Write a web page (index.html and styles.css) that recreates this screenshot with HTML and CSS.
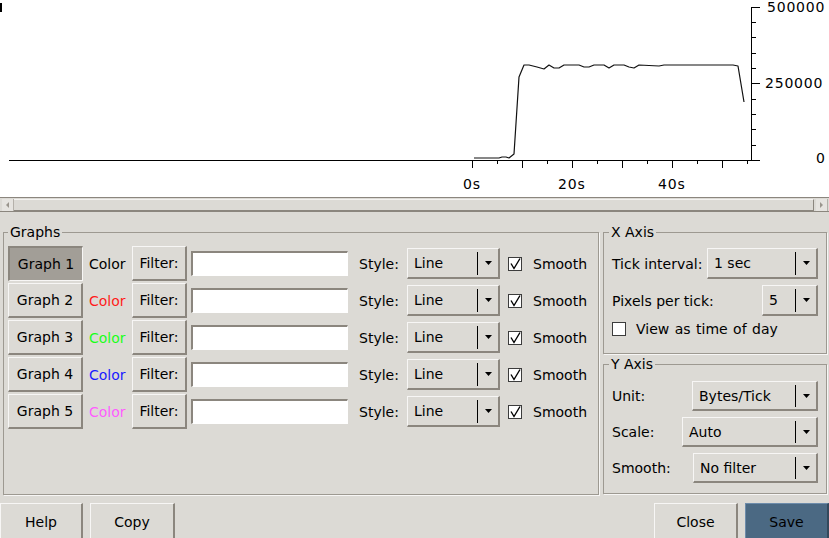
FILE: index.html
```html
<!DOCTYPE html>
<html>
<head>
<meta charset="utf-8">
<title>IO Graphs</title>
<link rel="stylesheet" href="styles.css">
</head>
<body>
<div class="plot">
  <svg class="plot-svg" width="829" height="197" viewBox="0 0 829 197">
    <rect x="0" y="3" width="2" height="9" fill="#000"/>
    <g class="axis" stroke="#000" stroke-width="1" fill="none">
      <line x1="9" y1="160.5" x2="752" y2="160.5"/>
      <line x1="751.5" y1="7" x2="751.5" y2="161"/>
      <line x1="751" y1="7.5" x2="760" y2="7.5"/>
      <line x1="751" y1="22.5" x2="756" y2="22.5"/>
      <line x1="751" y1="37.5" x2="756" y2="37.5"/>
      <line x1="751" y1="53.5" x2="756" y2="53.5"/>
      <line x1="751" y1="68.5" x2="756" y2="68.5"/>
      <line x1="751" y1="83.5" x2="760" y2="83.5"/>
      <line x1="751" y1="99.5" x2="756" y2="99.5"/>
      <line x1="751" y1="114.5" x2="756" y2="114.5"/>
      <line x1="751" y1="129.5" x2="756" y2="129.5"/>
      <line x1="751" y1="145.5" x2="756" y2="145.5"/>
      <line x1="751" y1="160.5" x2="760" y2="160.5"/>
      <line x1="472.5" y1="160" x2="472.5" y2="168"/>
      <line x1="497.5" y1="160" x2="497.5" y2="164"/>
      <line x1="522.5" y1="160" x2="522.5" y2="168"/>
      <line x1="547.5" y1="160" x2="547.5" y2="164"/>
      <line x1="572.5" y1="160" x2="572.5" y2="168"/>
      <line x1="597.5" y1="160" x2="597.5" y2="164"/>
      <line x1="622.5" y1="160" x2="622.5" y2="168"/>
      <line x1="647.5" y1="160" x2="647.5" y2="164"/>
      <line x1="672.5" y1="160" x2="672.5" y2="168"/>
      <line x1="697.5" y1="160" x2="697.5" y2="164"/>
      <line x1="722.5" y1="160" x2="722.5" y2="168"/>
      <line x1="747.5" y1="160" x2="747.5" y2="164"/>
    </g>
    <polyline class="series" fill="none" stroke="#111" stroke-width="1.2" stroke-linejoin="round"
      points="474,158 499,158 502,157 506,157 509,158 514,154 519,77 524,65 529,65 537,67 544,69 549,65 554,68 559,68 564,65 579,65 584,67 589,67 594,65 604,65 609,68 614,65 624,65 629,67 634,68 639,65 659,66 664,65 733,65 738,66 744,102"/>
    <g class="axis-labels">
      <text x="463" y="189">0s</text>
      <text x="558" y="189">20s</text>
      <text x="658" y="189">40s</text>
      <text x="767" y="12">500000</text>
      <text x="765" y="88">250000</text>
      <text x="816" y="163">0</text>
    </g>
  </svg>
</div>

<div class="hscroll">
  <div class="sb-btn"><span class="tri tri-left"></span></div>
  <div class="sb-thumb"></div>
  <div class="sb-btn"><span class="tri tri-right"></span></div>
</div>

<div class="panels">
  <fieldset class="group graphs">
    <legend>Graphs</legend>
    <div class="graph-rows">
      <div class="graph-row">
        <button class="btn gbtn pressed">Graph 1</button>
        <span class="color c-black">Color</span>
        <button class="btn filter">Filter:</button>
        <span class="entry"></span>
        <span class="style-label">Style:</span>
        <div class="combo style-combo"><span class="combo-text">Line</span><span class="combo-sep"></span><span class="combo-arrow"><svg width="7" height="4" viewBox="0 0 7 4"><polygon points="0,0 7,0 3.5,4" fill="#000"/></svg></span></div>
        <span class="check checked"><svg width="12" height="12" viewBox="0 0 12 12"><polyline points="2,5.5 5,10.5 11,0.5" fill="none" stroke="#000" stroke-width="1.4"/></svg></span>
        <span class="smooth-label">Smooth</span>
      </div>
      <div class="graph-row">
        <button class="btn gbtn">Graph 2</button>
        <span class="color c-red">Color</span>
        <button class="btn filter">Filter:</button>
        <span class="entry"></span>
        <span class="style-label">Style:</span>
        <div class="combo style-combo"><span class="combo-text">Line</span><span class="combo-sep"></span><span class="combo-arrow"><svg width="7" height="4" viewBox="0 0 7 4"><polygon points="0,0 7,0 3.5,4" fill="#000"/></svg></span></div>
        <span class="check checked"><svg width="12" height="12" viewBox="0 0 12 12"><polyline points="2,5.5 5,10.5 11,0.5" fill="none" stroke="#000" stroke-width="1.4"/></svg></span>
        <span class="smooth-label">Smooth</span>
      </div>
      <div class="graph-row">
        <button class="btn gbtn">Graph 3</button>
        <span class="color c-green">Color</span>
        <button class="btn filter">Filter:</button>
        <span class="entry"></span>
        <span class="style-label">Style:</span>
        <div class="combo style-combo"><span class="combo-text">Line</span><span class="combo-sep"></span><span class="combo-arrow"><svg width="7" height="4" viewBox="0 0 7 4"><polygon points="0,0 7,0 3.5,4" fill="#000"/></svg></span></div>
        <span class="check checked"><svg width="12" height="12" viewBox="0 0 12 12"><polyline points="2,5.5 5,10.5 11,0.5" fill="none" stroke="#000" stroke-width="1.4"/></svg></span>
        <span class="smooth-label">Smooth</span>
      </div>
      <div class="graph-row">
        <button class="btn gbtn">Graph 4</button>
        <span class="color c-blue">Color</span>
        <button class="btn filter">Filter:</button>
        <span class="entry"></span>
        <span class="style-label">Style:</span>
        <div class="combo style-combo"><span class="combo-text">Line</span><span class="combo-sep"></span><span class="combo-arrow"><svg width="7" height="4" viewBox="0 0 7 4"><polygon points="0,0 7,0 3.5,4" fill="#000"/></svg></span></div>
        <span class="check checked"><svg width="12" height="12" viewBox="0 0 12 12"><polyline points="2,5.5 5,10.5 11,0.5" fill="none" stroke="#000" stroke-width="1.4"/></svg></span>
        <span class="smooth-label">Smooth</span>
      </div>
      <div class="graph-row">
        <button class="btn gbtn">Graph 5</button>
        <span class="color c-pink">Color</span>
        <button class="btn filter">Filter:</button>
        <span class="entry"></span>
        <span class="style-label">Style:</span>
        <div class="combo style-combo"><span class="combo-text">Line</span><span class="combo-sep"></span><span class="combo-arrow"><svg width="7" height="4" viewBox="0 0 7 4"><polygon points="0,0 7,0 3.5,4" fill="#000"/></svg></span></div>
        <span class="check checked"><svg width="12" height="12" viewBox="0 0 12 12"><polyline points="2,5.5 5,10.5 11,0.5" fill="none" stroke="#000" stroke-width="1.4"/></svg></span>
        <span class="smooth-label">Smooth</span>
      </div>
    </div>
  </fieldset>

  <div class="axes">
    <fieldset class="group xaxis">
      <legend>X Axis</legend>
      <div class="axis-row">
        <span>Tick interval:</span>
        <div class="combo w-tick"><span class="combo-text">1 sec</span><span class="combo-sep"></span><span class="combo-arrow"><svg width="7" height="4" viewBox="0 0 7 4"><polygon points="0,0 7,0 3.5,4" fill="#000"/></svg></span></div>
      </div>
      <div class="axis-row">
        <span>Pixels per tick:</span>
        <div class="combo w-ppt"><span class="combo-text">5</span><span class="combo-sep"></span><span class="combo-arrow"><svg width="7" height="4" viewBox="0 0 7 4"><polygon points="0,0 7,0 3.5,4" fill="#000"/></svg></span></div>
      </div>
      <div class="check-row">
        <span class="check"></span>
        <span class="check-text">View as time of day</span>
      </div>
    </fieldset>
    <fieldset class="group yaxis">
      <legend>Y Axis</legend>
      <div class="axis-row">
        <span>Unit:</span>
        <div class="combo w-unit"><span class="combo-text">Bytes/Tick</span><span class="combo-sep"></span><span class="combo-arrow"><svg width="7" height="4" viewBox="0 0 7 4"><polygon points="0,0 7,0 3.5,4" fill="#000"/></svg></span></div>
      </div>
      <div class="axis-row">
        <span>Scale:</span>
        <div class="combo w-scale"><span class="combo-text">Auto</span><span class="combo-sep"></span><span class="combo-arrow"><svg width="7" height="4" viewBox="0 0 7 4"><polygon points="0,0 7,0 3.5,4" fill="#000"/></svg></span></div>
      </div>
      <div class="axis-row">
        <span>Smooth:</span>
        <div class="combo w-smooth"><span class="combo-text">No filter</span><span class="combo-sep"></span><span class="combo-arrow"><svg width="7" height="4" viewBox="0 0 7 4"><polygon points="0,0 7,0 3.5,4" fill="#000"/></svg></span></div>
      </div>
    </fieldset>
  </div>
</div>

<div class="actions">
  <button class="btn action w-help">Help</button>
  <button class="btn action w-copy">Copy</button>
  <span class="spacer"></span>
  <button class="btn action w-close">Close</button>
  <button class="btn action primary w-save">Save</button>
</div>
</body>
</html>
```
FILE: styles.css
```css
* { box-sizing: border-box; }
html, body { margin: 0; padding: 0; }
body {
  width: 829px;
  height: 538px;
  overflow: hidden;
  background: #dcdad5;
  font-family: "DejaVu Sans", sans-serif;
  font-size: 14px;
  color: #000;
}

/* plot */
.plot { height: 197px; background: #fff; }
.plot-svg { display: block; }
.axis-labels text {
  font-family: "DejaVu Sans", sans-serif;
  font-size: 14px;
  letter-spacing: 0.8px;
  fill: #000;
}

/* scrollbar */
.hscroll {
  height: 15px;
  border-top: 1px solid #8b867e;
  border-bottom: 1px solid #8b867e;
  display: flex;
  padding: 1px 1px 0 2px;
}
.sb-btn {
  width: 12px;
  background: #e6e4e0;
  border-right: 1px solid #b5b1aa;
  display: flex;
  align-items: center;
  justify-content: center;
}
.sb-thumb {
  flex: 1;
  border-top: 1px solid #f4f3f1;
  border-right: 1px solid #8b867e;
  border-bottom: 1px solid #8b867e;
  margin-right: 2px;
}
.tri { width: 0; height: 0; border-top: 3px solid transparent; border-bottom: 3px solid transparent; }
.tri-left { border-right: 3px solid #9a958d; }
.tri-right { border-left: 3px solid #9a958d; }

/* panels */
.panels {
  display: flex;
  gap: 4px;
  padding: 12px 2px 0 3px;
}
.group {
  margin: 0;
  min-width: 0;
  border: 1px solid #9d9991;
  box-shadow: 1px 1px 0 #f7f6f5;
}
.group legend {
  padding: 0 2px;
  line-height: 17px;
  font-size: 14px;
}
.graphs {
  width: 596px;
  height: 271px;
  padding: 5px 4px 0 4px;
}
.axes {
  width: 224px;
  display: flex;
  flex-direction: column;
  gap: 2px;
}
.xaxis {
  height: 130px;
  padding: 7px 8px 0 8px;
}
.yaxis {
  height: 138px;
  padding: 8px 8px 0 8px;
}
.xaxis legend, .yaxis legend { margin-left: -3px; }

/* buttons */
.btn {
  font-family: inherit;
  font-size: 14px;
  color: #000;
  background: #dcdad5;
  border-style: solid;
  border-width: 1px 2px 2px 1px;
  border-color: #f7f6f5 #8b867e #8b867e #f7f6f5;
  padding: 0;
  margin: 0;
  text-align: center;
}
.btn.pressed {
  background: #a29e97;
  border-width: 2px 1px 1px 2px;
  border-color: #8b867e #f7f6f5 #f7f6f5 #8b867e;
}

/* graph rows */
.graph-rows { display: flex; flex-direction: column; gap: 2px; }
.graph-row { display: flex; align-items: center; height: 35px; }
.gbtn { width: 75px; height: 35px; }
.color { width: 37px; margin: 0 6px; white-space: nowrap; }
.c-black { color: #000; }
.c-red { color: #ff1a1a; }
.c-green { color: #1aff1a; }
.c-blue { color: #1a1aff; }
.c-pink { color: #ff5cff; }
.filter { width: 55px; height: 35px; }
.entry {
  display: block;
  width: 157px;
  height: 25px;
  margin-left: 4px;
  background: #fff;
  border-style: solid;
  border-width: 2px 1px 1px 2px;
  border-color: #8b867e #fff #fff #8b867e;
}
.style-label { margin-left: 11px; width: 40px; }
.style-combo { margin-left: 8px; width: 93px; }
.check {
  display: flex;
  align-items: center;
  justify-content: center;
  width: 14px;
  height: 14px;
  border: 1px solid #3c3c3c;
  background: #fff;
}
.graph-row .check { margin-left: 8px; }
.smooth-label { margin-left: 11px; }

/* combo */
.combo {
  display: flex;
  align-items: stretch;
  height: 31px;
  padding-left: 6px;
  border-style: solid;
  border-width: 1px 2px 2px 1px;
  border-color: #f7f6f5 #8b867e #8b867e #f7f6f5;
  background: #dcdad5;
}
.combo-text { flex: 1; display: flex; align-items: center; white-space: nowrap; }
.combo-sep { width: 1px; background: #000; margin: 3px 0 2px 0; }
.combo-arrow { width: 20px; display: flex; align-items: center; justify-content: center; }
.combo-arrow svg { display: block; }

/* axis rows */
.axis-row {
  display: flex;
  align-items: center;
  justify-content: space-between;
  height: 31px;
  margin-bottom: 6px;
}
.yaxis .axis-row { height: 30px; }
.yaxis .combo { height: 30px; }
.w-tick { width: 111px; }
.w-ppt { width: 56px; }
.w-unit { width: 126px; }
.w-scale { width: 136px; }
.w-smooth { width: 125px; }
.check-row {
  display: flex;
  align-items: center;
  height: 14px;
  margin-top: 3px;
}
.check-text { margin-left: 10px; word-spacing: 1px; }

/* actions */
.actions { display: flex; margin-top: 8px; }
.action { height: 38px; }
.w-help { width: 83px; }
.w-copy { width: 85px; margin-left: 7px; }
.spacer { flex: 1; }
.w-close { width: 84px; }
.w-save { width: 84px; margin-left: 7px; }
.primary {
  background: #4b6983;
  border-color: #6d8cab #34495c #34495c #6d8cab;
}
```
